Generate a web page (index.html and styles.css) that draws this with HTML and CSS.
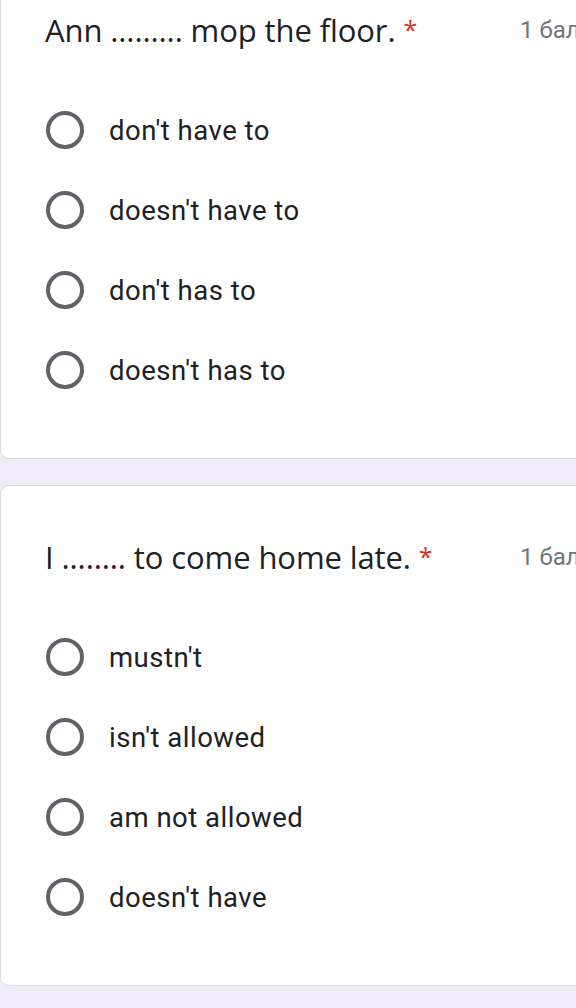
FILE: index.html
```html
<!DOCTYPE html>
<html lang="en">
<head>
<meta charset="utf-8">
<title>Form</title>
<link rel="stylesheet" href="styles.css">
</head>
<body>
<div class="form">
  <section class="card">
    <div class="head">
      <div class="title">Ann ......... mop the floor. <span class="req">*</span></div>
      <div class="points">1 балл</div>
    </div>
    <div class="options">
      <div class="opt"><span class="radio"></span><span class="label">don't have to</span></div>
      <div class="opt"><span class="radio"></span><span class="label">doesn't have to</span></div>
      <div class="opt"><span class="radio"></span><span class="label">don't has to</span></div>
      <div class="opt"><span class="radio"></span><span class="label">doesn't has to</span></div>
    </div>
  </section>
  <section class="card">
    <div class="head">
      <div class="title">I ........ to come home late. <span class="req">*</span></div>
      <div class="points">1 балл</div>
    </div>
    <div class="options">
      <div class="opt"><span class="radio"></span><span class="label">mustn't</span></div>
      <div class="opt"><span class="radio"></span><span class="label">isn't allowed</span></div>
      <div class="opt"><span class="radio"></span><span class="label">am not allowed</span></div>
      <div class="opt"><span class="radio"></span><span class="label">doesn't have</span></div>
    </div>
  </section>
</div>
</body>
</html>
```
FILE: styles.css
```css
html, body {
  margin: 0;
  padding: 0;
  background: #f0ebf8;
  overflow: hidden;
}
body {
  width: 576px;
  height: 1008px;
}
.form {
  margin-top: -42px;
  display: flex;
  flex-direction: column;
  gap: 26px;
  width: 640px;
}
.card {
  background: #fff;
  border: 1px solid #dadce0;
  border-radius: 9px;
  padding: 50px 0 48px 44px;
}
.head {
  display: grid;
  grid-template-columns: 475px auto;
  align-items: center;
  height: 40px;
}
.title {
  font-family: "Open Sans", sans-serif;
  font-size: 31px;
  letter-spacing: -0.1px;
  color: #202124;
  white-space: nowrap;
  line-height: 40px;
}
.req {
  color: #d93025;
  font-size: 25px;
  vertical-align: 3px;
}
.points {
  font-family: Roboto, sans-serif;
  font-size: 24px;
  color: #70757a;
  white-space: nowrap;
}
.options {
  margin-top: 41px;
  display: flex;
  flex-direction: column;
}
.opt {
  height: 80px;
  display: flex;
  align-items: center;
  gap: 25px;
  padding-left: 1px;
}
.radio {
  box-sizing: border-box;
  width: 38px;
  height: 38px;
  border: 4px solid #5f6368;
  border-radius: 50%;
  flex: none;
}
.label {
  font-family: Roboto, sans-serif;
  font-size: 27.5px;
  letter-spacing: 0.5px;
  color: #202124;
}
```
